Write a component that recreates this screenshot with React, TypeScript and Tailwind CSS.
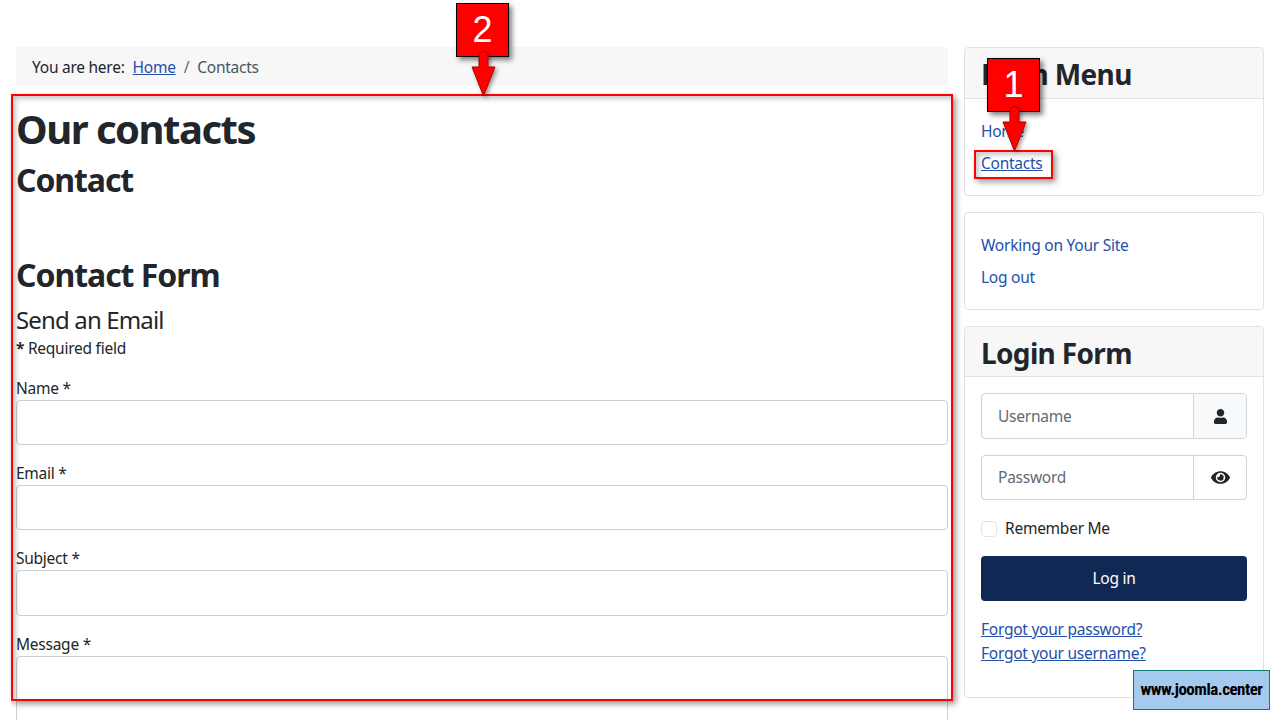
import { FaUser, FaEye } from "react-icons/fa";

const bodyFont = "font-['Noto_Sans','Open_Sans',sans-serif]";

function Field({ label, tall }: { label: string; tall?: boolean }) {
  return (
    <div className="mb-[16px]">
      <label className="block h-[24px] leading-[24px]">{label}</label>
      <div className={`${tall ? "h-[46px]" : "h-[45px]"} w-full border border-[#c9d0d8] rounded-[4px] bg-white`} />
    </div>
  );
}

function Card({ title, short, children }: { title?: string; short?: boolean; children: React.ReactNode }) {
  return (
    <div className="border border-[#dfe3e7] rounded-[4px] bg-white">
      {title && (
        <div className={`${short ? "h-[50px] pt-[2px]" : "h-[51px] pt-[1px]"} px-[16px] bg-[#f7f7f7] border-b border-[#dfe3e7] rounded-t-[4px] flex items-center`}>
          <h3 className="text-[28px] font-bold leading-none tracking-[-0.65px] text-[#22262a]">{title}</h3>
        </div>
      )}
      <div className="p-[16px]">{children}</div>
    </div>
  );
}

function Marker({ num, className }: { num: string; className: string }) {
  return (
    <div className={`absolute w-[53px] ${className}`}>
      <div className="relative z-10 h-[54px] bg-[#ff0000] border border-black shadow-[3px_3px_5px_rgba(0,0,0,0.5)] flex items-center justify-center text-white text-[36px] font-['Liberation_Sans',sans-serif] leading-none">
        {num}
      </div>
      <svg className="absolute z-20 left-[15px] top-[48px] drop-shadow-[2px_2px_2px_rgba(0,0,0,0.4)]" width="25" height="46" viewBox="0 0 25 46">
        <path d="M8 16V5a4.5 4.5 0 0 1 9 0V16h7L12.5 45 1 16z" fill="#ff0000" stroke="#b00000" strokeWidth="1" />
      </svg>
    </div>
  );
}

function InputRow({ placeholder, icon, shade, tall }: { placeholder: string; icon: React.ReactNode; shade?: boolean; tall?: boolean }) {
  return (
    <div className={`flex ${tall ? "h-[46px]" : "h-[45px]"} border border-[#ced4da] rounded-[4px]`}>
      <div className={`flex-1 flex items-center pl-[16px] text-[#5f6b75] ${tall ? "pt-[1px]" : ""}`}>{placeholder}</div>
      <div className={`w-[53px] flex items-center justify-center border-l border-[#ced4da] rounded-r-[4px] text-[#22262a] ${shade ? "bg-[#f8f9fa]" : ""}`}>
        {icon}
      </div>
    </div>
  );
}

export default function App() {
  return (
    <div className={`relative h-[720px] w-[1280px] overflow-hidden bg-white text-[#22262a] text-[15.5px] tracking-[-0.25px] ${bodyFont}`}>
      <div className="flex gap-[16px] px-[16px] pt-[47px]">
        <main className="w-[932px]">
          <div className="h-[39px] bg-[#f7f7f7] px-[16px] pt-[2px] flex items-center">
            <span>You are here:</span>
            <a className="ml-[8px] underline text-[#224faa]">Home</a>
            <span className="mx-[8px] text-[#5f6b75]">/</span>
            <span className="text-[#4a5560]">Contacts</span>
          </div>
          <h1 className="mt-[19px] text-[40px] font-bold leading-[48px] tracking-[-1.5px]">Our contacts</h1>
          <h2 className="mt-[8px] text-[32px] font-bold leading-[38px] tracking-[-1.1px]">Contact</h2>
          <h2 className="mt-[57px] text-[32px] font-bold leading-[38px] tracking-[-1.05px]">Contact Form</h2>
          <div className="mt-[8px] text-[24px] leading-[36px] tracking-[-0.85px]">Send an Email</div>
          <div className="h-[24px] leading-[24px] mt-[-2px] mb-[16px]">
            <strong>*</strong> Required field
          </div>
          <Field label="Name *" />
          <Field label="Email *" />
          <Field label="Subject *" tall />
          <label className="block h-[24px] leading-[24px]">Message *</label>
          <div className="h-[120px] w-full border border-[#c9d0d8] rounded-[4px]" />
        </main>
        <aside className="w-[300px] flex flex-col gap-[16px]">
          <Card title="Main Menu">
            <ul className="flex flex-col gap-[8px] text-[#224faa] pt-[4px] pb-[4px]">
              <li className="h-[24px] leading-[24px]">Home</li>
              <li className="h-[24px] leading-[24px] underline">Contacts</li>
            </ul>
          </Card>
          <Card>
            <ul className="flex flex-col gap-[8px] text-[#224faa] pt-[4px] pb-[4px]">
              <li className="h-[24px] leading-[24px]">Working on Your Site</li>
              <li className="h-[24px] leading-[24px]">Log out</li>
            </ul>
          </Card>
          <Card title="Login Form" short>
            <InputRow placeholder="Username" shade tall icon={<FaUser size={15} />} />
            <div className="h-[16px]" />
            <InputRow placeholder="Password" icon={<FaEye size={19} />} />
            <div className="mt-[19px] flex items-center h-[20px]">
              <div className="w-[16px] h-[16px] border border-[#dfe3e7] rounded-[4px]" />
              <span className="ml-[8px]">Remember Me</span>
            </div>
            <div className="mt-[17px] h-[45px] bg-[#112855] rounded-[4px] flex items-center justify-center text-white">Log in</div>
            <div className="mt-[16px] text-[#224faa] underline leading-[24px]">
              <div>Forgot your password?</div>
              <div>Forgot your username?</div>
            </div>
            <div className="h-[16px]" />
          </Card>
        </aside>
      </div>

      <div className="absolute left-[11px] top-[94px] w-[942px] h-[607px] border-[2px] border-[#ff0000] shadow-[3px_3px_6px_rgba(0,0,0,0.4),inset_3px_3px_5px_rgba(0,0,0,0.22)]" />
      <div className="absolute left-[974px] top-[150px] w-[79px] h-[29px] border-[2px] border-[#ff0000] shadow-[3px_3px_6px_rgba(0,0,0,0.4),inset_3px_3px_5px_rgba(0,0,0,0.22)]" />
      <Marker num="2" className="left-[456px] top-[3px]" />
      <Marker num="1" className="left-[987px] top-[58px]" />

      <div className="absolute left-[1133px] top-[670px] w-[137px] h-[40px] bg-[#a6c9ef] border border-[#0f7a7a] flex items-center justify-center text-black font-bold text-[17px] tracking-[-0.5px] font-['Liberation_Sans_Narrow','Roboto_Condensed','Liberation_Sans',sans-serif]">
        www.joomla.center
      </div>
    </div>
  );
}
